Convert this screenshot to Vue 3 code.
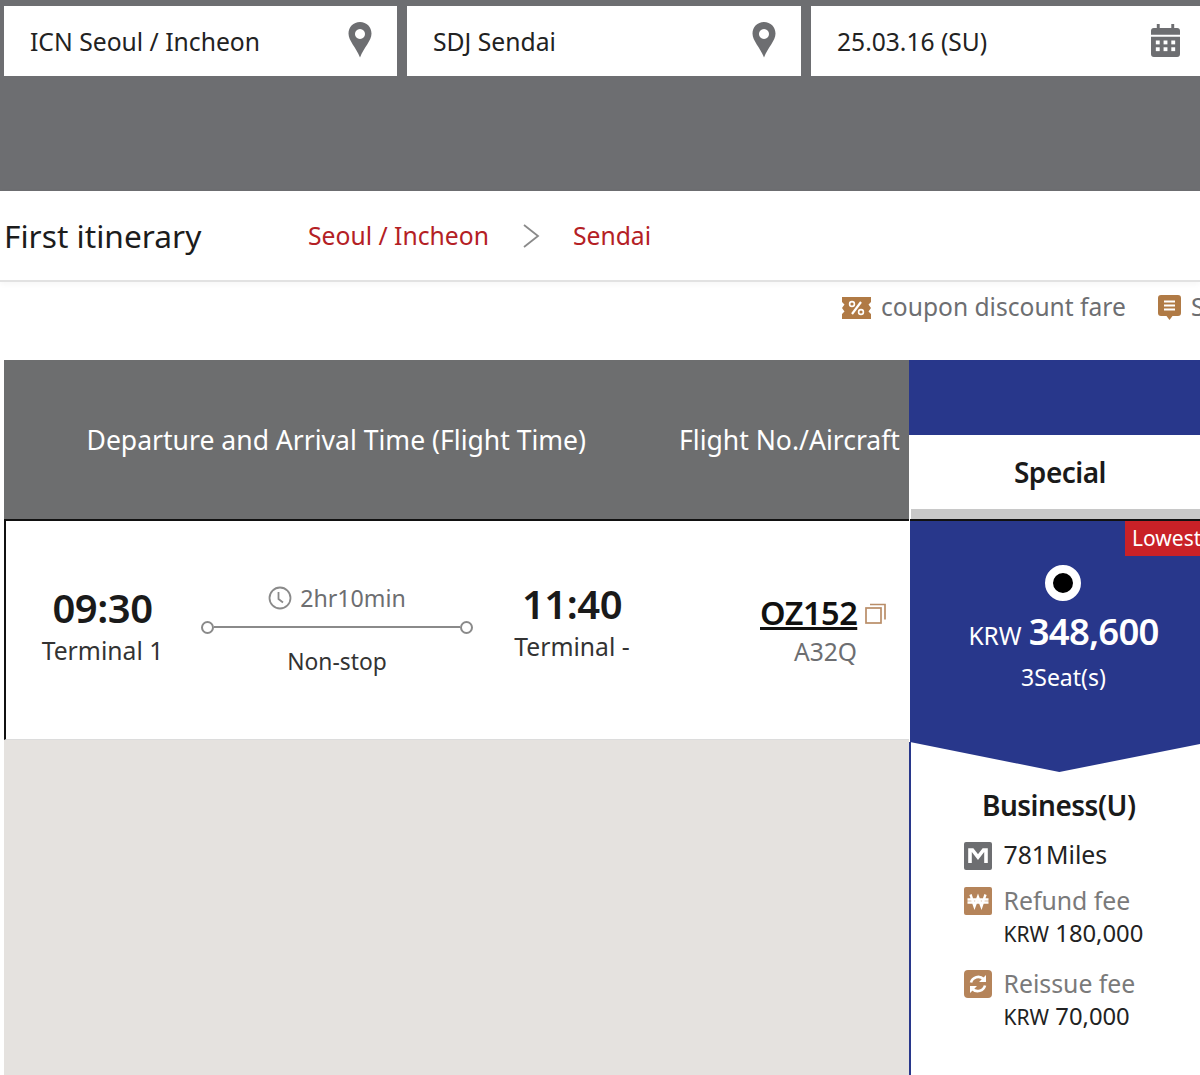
<script setup>
const fields = [
  { text: 'ICN Seoul / Incheon', icon: 'pin' },
  { text: 'SDJ Sendai', icon: 'pin' },
  { text: '25.03.16 (SU)', icon: 'cal' }
]
</script>

<template>
  <div class="page">
    <section class="search">
      <div v-for="f in fields" :key="f.text" class="field">
        <span>{{ f.text }}</span>
        <svg v-if="f.icon === 'pin'" class="pin" width="24" height="36" viewBox="0 0 24 36">
          <path fill-rule="evenodd" fill="#6d6e71" d="M12 0C5.400 0 0.500 5 0.500 11.500C0.500 19 8 25 12 35.500C16 25 23.500 19 23.500 11.500C23.500 5 18.600 0 12 0ZM12 7A5 5 0 1 1 11.990 7Z"/>
        </svg>
        <svg v-else class="cal" width="29" height="33" viewBox="0 0 30 34">
          <path fill="#6d6e71" d="M6 0h3v4h12V0h3v4h3a3 3 0 0 1 3 3v4H0V7a3 3 0 0 1 3-3h3ZM0 13h30v18a3 3 0 0 1-3 3H3a3 3 0 0 1-3-3Z"/>
          <g fill="#fff">
            <rect x="5" y="17" width="4" height="4"/><rect x="13" y="17" width="4" height="4"/><rect x="21" y="17" width="4" height="4"/>
            <rect x="5" y="24" width="4" height="4"/><rect x="13" y="24" width="4" height="4"/><rect x="21" y="24" width="4" height="4"/>
          </g>
        </svg>
      </div>
    </section>

    <section class="itinerary">
      <h2>First itinerary</h2>
      <div class="route">
        <span>Seoul / Incheon</span>
        <svg width="18" height="26" viewBox="0 0 18 26"><path d="M2 2l14 11L2 24" fill="none" stroke="#8a8a8a" stroke-width="1.800"/></svg>
        <span>Sendai</span>
      </div>
    </section>

    <section class="legend">
      <svg width="31" height="22" viewBox="0 0 31 22">
        <path fill="#b07a45" d="M1 0h29v5l-2.500 2.500 2.500 3.500-2.500 3.500 2.500 2.500v5H1v-5l2.500-2.500L1 11l2.500-3.500L1 5Z"/>
        <path stroke="#fff" stroke-width="2.200" d="M11 17L20 5"/>
        <circle cx="11" cy="7" r="2.400" fill="none" stroke="#fff" stroke-width="1.600"/>
        <circle cx="20" cy="15" r="2.400" fill="none" stroke="#fff" stroke-width="1.600"/>
      </svg>
      <span class="legend-text">coupon discount fare</span>
      <svg class="legend-second" width="23" height="25" viewBox="0 0 23 25">
        <path fill="#b07a45" d="M3 0h17a3 3 0 0 1 3 3v15a3 3 0 0 1-3 3h-5.500L11.500 25 8.500 21H3a3 3 0 0 1-3-3V3a3 3 0 0 1 3-3Z"/>
        <path stroke="#fff" stroke-width="1.800" d="M6 6.500h11M6 10.500h11M6 14.500h11"/>
      </svg>
      <span class="legend-text">Special</span>
    </section>

    <section class="table">
      <div class="left">
        <div class="head">
          <div class="head-time">Departure and Arrival Time (Flight Time)</div>
          <div class="head-flight">Flight No./Aircraft</div>
        </div>
        <div class="row">
          <div class="stop dep">
            <strong>09:30</strong>
            <span>Terminal 1</span>
          </div>
          <div class="track">
            <div class="duration">
              <svg width="24" height="24" viewBox="0 0 24 24">
                <circle cx="12" cy="12" r="10.500" fill="none" stroke="#8a8a8a" stroke-width="1.800"/>
                <path d="M10.500 6v7l4.500 3.500" fill="none" stroke="#8a8a8a" stroke-width="1.800"/>
              </svg>
              <span>2hr10min</span>
            </div>
            <div class="line"><i></i><b></b><i></i></div>
            <div class="nonstop">Non-stop</div>
          </div>
          <div class="stop arr">
            <strong>11:40</strong>
            <span>Terminal -</span>
          </div>
          <div class="flight">
            <div class="flight-no">
              <a>OZ152</a>
              <svg width="21" height="21" viewBox="0 0 21 21" fill="none" stroke="#b98d68" stroke-width="1.700">
                <rect x="1" y="5" width="15" height="15"/>
                <path d="M5 1.500h15v15"/>
              </svg>
            </div>
            <div class="aircraft">A32Q</div>
          </div>
        </div>
        <div class="empty"></div>
      </div>

      <div class="right">
        <div class="right-head">
          <div class="head-blue"></div>
          <div class="special">Special</div>
        </div>
        <div class="fare">
          <div class="lowest">Lowest</div>
          <div class="radio"></div>
          <div class="price"><span>KRW</span> <strong>348,600</strong></div>
          <div class="seats">3Seat(s)</div>
        </div>
        <div class="details">
          <h3>Business(U)</h3>
          <div class="item miles">
            <svg class="badge" width="28" height="28" viewBox="0 0 28 28">
              <rect width="28" height="28" rx="2" fill="#6d6e71"/>
              <path d="M6 21V8h2.500L14 15l5.500-7H22v13" fill="none" stroke="#fff" stroke-width="3.600"/>
            </svg>
            <div>781Miles</div>
          </div>
          <div class="item fee">
            <svg class="badge" width="28" height="28" viewBox="0 0 28 28">
              <rect width="28" height="28" rx="2" fill="#b5845a"/>
              <path d="M6.500 7.500l4 12L14 10l3.500 9.500 4-12M3.500 12.500h21M3.500 15.500h21" fill="none" stroke="#fff" stroke-width="2.400"/>
            </svg>
            <div>
              <div class="label">Refund fee</div>
              <div class="amount"><small>KRW</small> 180,000</div>
            </div>
          </div>
          <div class="item fee reissue">
            <svg class="badge" width="28" height="28" viewBox="0 0 28 28">
              <rect width="28" height="28" rx="4" fill="#b5845a"/>
              <path d="M7 12.500a7.500 7.500 0 0 1 12.500-3.500M21 15.500a7.500 7.500 0 0 1-12.500 3.500" fill="none" stroke="#fff" stroke-width="2.600"/>
              <path d="M22 5v7h-7ZM6 23v-7h7Z" fill="#fff"/>
            </svg>
            <div>
              <div class="label">Reissue fee</div>
              <div class="amount"><small>KRW</small> 70,000</div>
            </div>
          </div>
        </div>
      </div>
    </section>
  </div>
</template>

<style>
html, body { margin: 0; overflow: hidden; background: #fff; }
</style>

<style scoped>
.page {
  width: 1200px;
  height: 1075px;
  overflow: hidden;
  font-family: "Noto Sans", "Open Sans", sans-serif;
  color: #1a1a1a;
  background: #fff;
}
.search {
  box-sizing: border-box;
  height: 191px;
  background: #6d6e71;
  padding: 6px 0 0 4px;
  display: flex;
  align-items: flex-start;
  gap: 10px;
}
.field {
  flex: 0 0 394px;
  box-sizing: border-box;
  height: 70px;
  background: #fff;
  padding: 0 25px 0 26px;
  display: flex;
  align-items: center;
  justify-content: space-between;
  font-size: 24.700px;
  color: #222;
}
.field:first-child { flex-basis: 393px; }
.pin { margin-top: -2px; }
.cal { margin-top: -2px; }
.field:nth-child(3) { flex: 0 0 389px; padding-left: 26px; padding-right: 20px; font-size: 24.600px; }
.itinerary {
  box-sizing: border-box;
  height: 91px;
  border-bottom: 2px solid #e2e2e2;
  box-shadow: 0 2px 6px rgba(0, 0, 0, 0.04);
  display: flex;
  align-items: center;
  padding-left: 4px;
}
.itinerary h2 {
  margin: 0;
  width: 304px;
  font-size: 31.700px;
  font-weight: 400;
  color: #1c1c1c;
}
.route {
  display: flex;
  align-items: center;
  gap: 33px;
  font-size: 24.700px;
  line-height: 36px;
  padding-top: 1px;
  color: #b42024;
}
.legend {
  box-sizing: border-box;
  height: 78px;
  padding: 10px 0 0 841px;
  display: flex;
  align-items: flex-start;
  white-space: nowrap;
}
.legend svg { margin-top: 5px; flex: none; }
.legend-text { font-size: 24.600px; color: #6d6e71; margin-left: 9px; line-height: 30px; }
.legend-second { margin-left: 32px; margin-top: 3px !important; }
.legend-second + .legend-text { margin-left: 10px; }
.table {
  display: flex;
  margin-left: 4px;
  height: 715px;
}
.left { width: 905px; flex: none; display: flex; flex-direction: column; }
.head {
  height: 159px;
  background: #6d6e6f;
  color: #fff;
  display: flex;
  align-items: center;
  font-size: 26.550px;
  white-space: nowrap;
}
.head-time { margin-left: 82.500px; width: 592.500px; }
.row {
  box-sizing: border-box;
  height: 221px;
  border-top: 2px solid #111;
  border-left: 2px solid #111;
  border-bottom: 1px solid #dcdcdc;
  background: #fff;
  display: flex;
  align-items: flex-start;
}
.stop { display: flex; flex-direction: column; align-items: center; }
.stop strong { font-size: 40px; font-weight: 600; line-height: 46px; color: #1a1a1a; letter-spacing: -0.500px; }
.stop span { font-size: 24.700px; line-height: 36px; color: #333; margin-top: 2px; }
.dep { width: 193px; padding-top: 64px; }
.arr { width: 198px; padding-top: 60px; margin-left: 2px; margin-right: -2px; }
.track { width: 272px; padding-top: 59px; margin-left: 2px; margin-right: -2px; }
.duration {
  display: flex;
  align-items: center;
  justify-content: center;
  gap: 8px;
  height: 36px;
  font-size: 23.200px;
  color: #6d6e71;
}
.line { display: flex; align-items: center; margin-top: 4px; height: 14px; }
.line b { flex: 1; height: 2px; background: #8a8a8a; }
.line i {
  box-sizing: border-box;
  width: 13px;
  height: 13px;
  border: 2px solid #8a8a8a;
  border-radius: 50%;
  background: #fff;
}
.nonstop { text-align: center; font-size: 22.800px; margin-top: 10px; color: #333; line-height: 36px; }
.flight { padding-top: 68px; margin-left: 91px; width: 140px; }
.flight-no { display: flex; align-items: center; gap: 8px; }
.flight-no a {
  font-size: 32.500px;
  font-weight: 600;
  line-height: 48px;
  text-decoration: underline;
  letter-spacing: -0.500px;
  color: #111;
}
.aircraft { margin-left: 34px; font-size: 24.600px; line-height: 30px; color: #6d6e71; }
.empty { flex: 1; background: #e5e2df; }
.right { flex: 1; display: flex; flex-direction: column; overflow: hidden; min-width: 0; }
.right-head { height: 159px; display: flex; flex-direction: column; }
.head-blue { height: 75px; background: #28378b; }
.special {
  box-sizing: border-box;
  height: 84px;
  border-bottom: 10px solid #c8c8c8;
  text-align: center;
  font-size: 28px;
  font-weight: 600;
  line-height: 74px;
  padding-left: 9px;
  letter-spacing: -0.500px;
  margin-left: 2px;
}
.fare {
  position: relative;
  box-sizing: border-box;
  height: 253px;
  border-top: 2px solid #111;
  margin-left: 1px;
  background: #28378b;
  clip-path: polygon(0 0, 100% 0, 100% 225px, 51.500% 100%, 0 223px);
  color: #fff;
  display: flex;
  flex-direction: column;
  align-items: center;
  padding: 44px 0 0 15px;
}
.lowest {
  position: absolute;
  top: 0;
  left: 215px;
  width: 90px;
  height: 35px;
  background: #c92127;
  font-size: 21px;
  line-height: 35px;
  padding-left: 7px;
  white-space: nowrap;
}
.radio {
  box-sizing: border-box;
  width: 36px;
  height: 36px;
  border-radius: 50%;
  background: #000;
  border: 8px solid #fff;
}
.price { margin: 6px 0 0 2px; line-height: 48px; white-space: nowrap; }
.price span { font-size: 24.500px; margin-right: 3px; }
.price strong { font-size: 36.500px; font-weight: 600; letter-spacing: -0.800px; }
.seats { font-size: 23px; margin: -6px 0 0 2px; line-height: 40px; }
.details {
  flex: 1;
  margin-top: -30px;
  border-left: 2px solid #28378b;
}
.details h3 {
  margin: 0;
  padding: 42px 0 0 71px;
  font-size: 28px;
  font-weight: 600;
  line-height: 42px;
  letter-spacing: -0.500px;
  color: #1a1a1a;
}
.item { display: flex; gap: 11.500px; padding-left: 53px; font-size: 24.800px; }
.miles { margin-top: 11px; line-height: 34px; color: #222; align-items: center; }
.fee { margin-top: 13px; }
.reissue { margin-top: 16px; }
.badge { flex: none; margin-top: 3px; }
.label { color: #7a7a7a; line-height: 33px; }
.amount { color: #222; line-height: 33px; white-space: nowrap; font-size: 23.800px; }
.amount small { font-size: 21px; }
</style>
